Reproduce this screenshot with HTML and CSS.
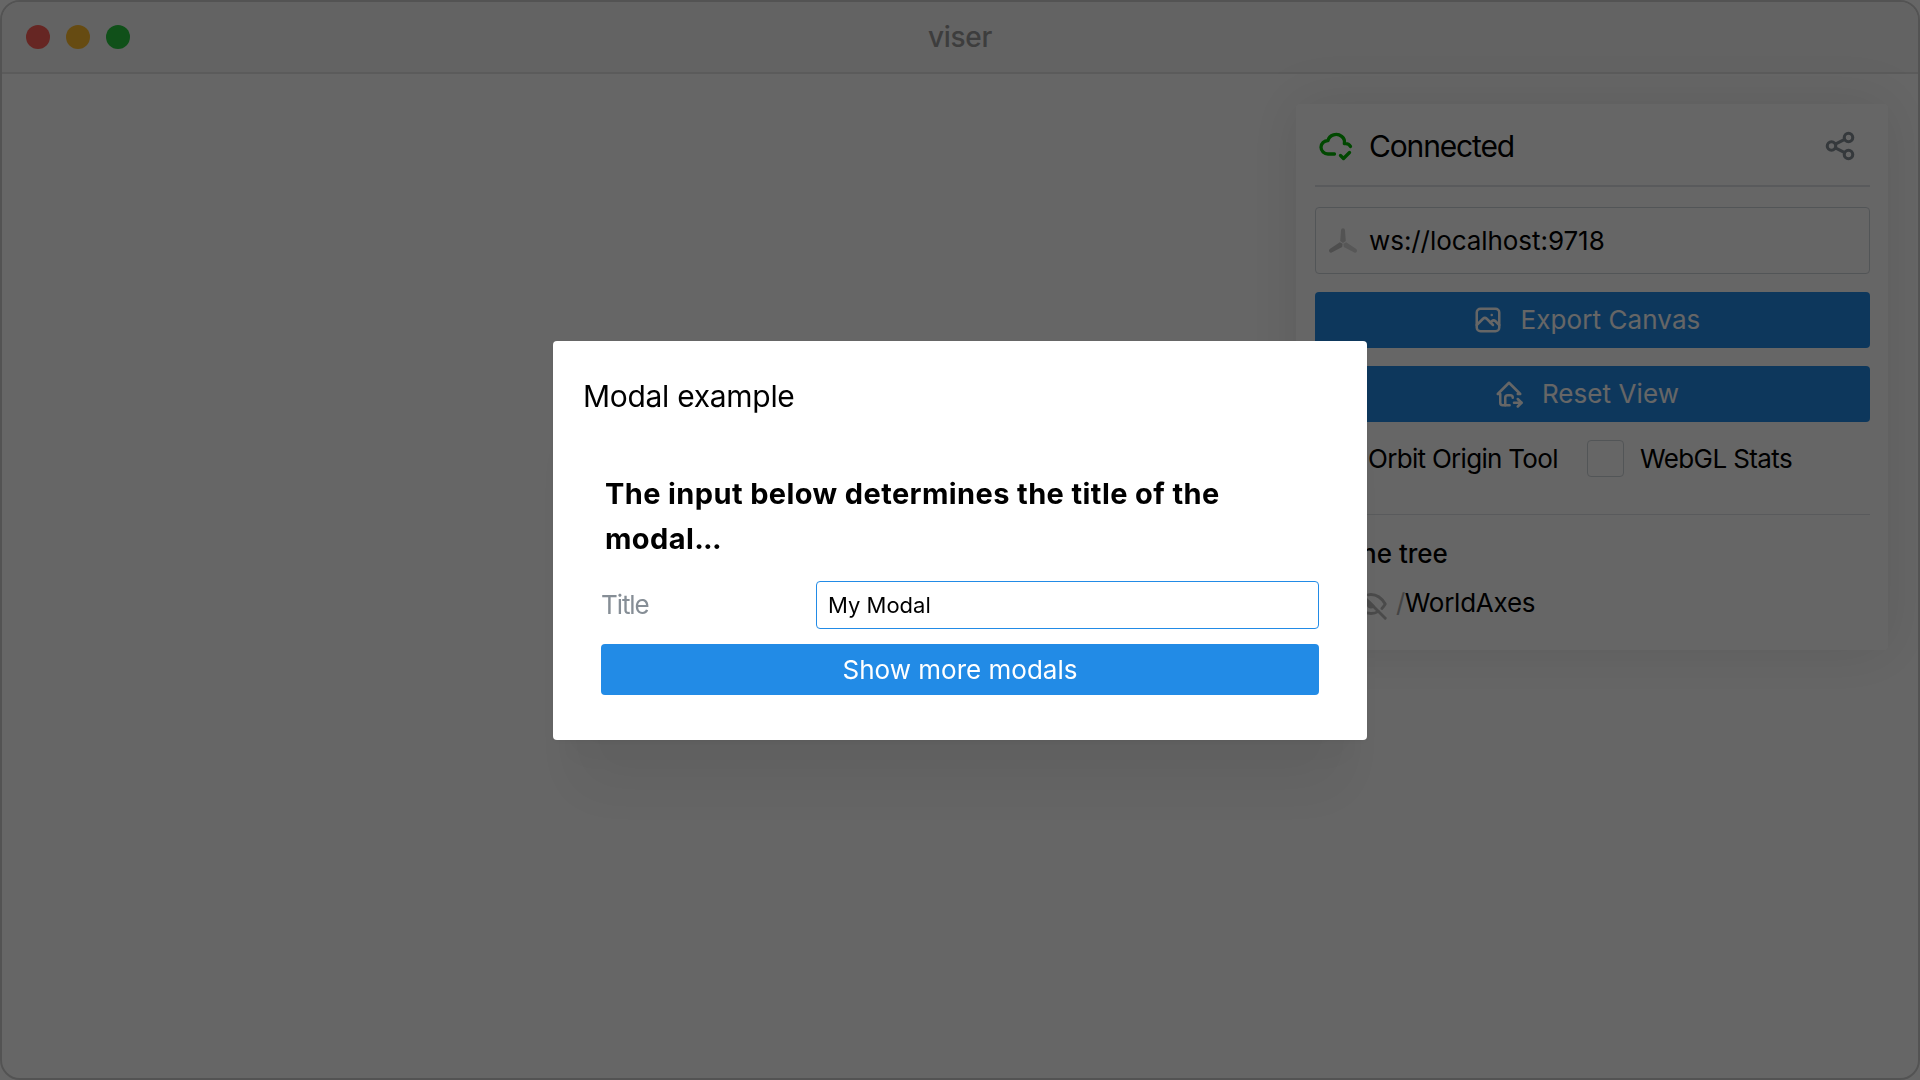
FILE: index.html
```html
<!DOCTYPE html>
<html lang="en">
<head>
<meta charset="utf-8">
<title>viser</title>
<link rel="stylesheet" href="styles.css">
</head>
<body>
<div class="window">
  <header class="titlebar">
    <div class="lights"><i class="light red"></i><i class="light yellow"></i><i class="light green"></i></div>
    <span class="window-title">viser</span>
  </header>
  <main class="viewport">
    <section class="panel">
      <div class="panel-head">
        <svg class="cloud" viewBox="0 0 24 24"><path d="M11 18.004h-4.343c-2.572 -.004 -4.657 -2.011 -4.657 -4.487c0 -2.475 2.085 -4.482 4.657 -4.482c.393 -1.762 1.794 -3.2 3.675 -3.773c1.88 -.572 3.956 -.193 5.444 1c1.488 1.19 2.162 3.007 1.77 4.769h.99c1.388 0 2.585 .82 3.138 2.007"/><path d="M15 19l2 2l4 -4"/></svg>
        <span class="status">Connected</span>
        <svg class="share" viewBox="0 0 24 24"><circle cx="6" cy="12" r="3"/><circle cx="18" cy="6" r="3"/><circle cx="18" cy="18" r="3"/><path d="M8.7 10.7l6.6 -3.4M8.7 13.3l6.6 3.4"/></svg>
      </div>
      <div class="panel-body">
        <div class="server">
          <svg class="logo" viewBox="0 0 32 30"><path class="spoke-a" d="M14 4.2a2 2 0 0 1 4 0l.8 10.800l-2.800 2l-2.800 -2z"/><path class="spoke-b" d="M12.800 16.200l2.800 1.600l-.4 3.200l-10.500 5.500a2 2 0 0 1 -2 -3.400z"/><path class="spoke-c" d="M19.200 16.200l-2.800 1.600l.4 3.200l10.500 5.500a2 2 0 0 0 2 -3.400z"/></svg>
          <span class="address">ws://localhost:9718</span>
        </div>
        <div class="button">
          <svg viewBox="0 0 24 24"><path d="M15 8h.01"/><path d="M3 6a3 3 0 0 1 3 -3h12a3 3 0 0 1 3 3v12a3 3 0 0 1 -3 3h-12a3 3 0 0 1 -3 -3v-12z"/><path d="M3 16l5 -5c.928 -.893 2.072 -.893 3 0l5 5"/><path d="M14 14l1 -1c.928 -.893 2.072 -.893 3 0l3 3"/></svg>
          <span>Export Canvas</span>
        </div>
        <div class="button">
          <svg viewBox="0 0 24 24"><path d="M9 21v-6a2 2 0 0 1 2 -2h2a2 2 0 0 1 2 2"/><path d="M19 12h2l-9 -9l-9 9h2v7a2 2 0 0 0 2 2h5.500"/><path d="M16 19h6"/><path d="M19 16l3 3l-3 3"/></svg>
          <span>Reset View</span>
        </div>
        <div class="checks">
          <span class="box"></span><span class="check-label orbit">Orbit Origin Tool</span>
          <span class="box"></span><span class="check-label">WebGL Stats</span>
        </div>
        <div class="tree">
          <div class="tree-title">Scene tree</div>
          <div class="node">
            <svg class="eye" viewBox="0 0 24 24"><path class="pupil" d="M10.585 10.587a2 2 0 0 0 2.829 2.828z"/><path d="M16.681 16.673a8.717 8.717 0 0 1 -4.681 1.327c-3.600 0 -6.600 -2 -9 -6c1.272 -2.120 2.712 -3.678 4.320 -4.674m2.860 -1.146a9.055 9.055 0 0 1 1.820 -.18c3.600 0 6.600 2 9 6c-.666 1.110 -1.379 2.067 -2.138 2.870"/><path d="M3 3l18 18"/></svg>
            <span class="slash">/</span><span class="node-name">WorldAxes</span>
          </div>
        </div>
      </div>
    </section>
  </main>
</div>
<div class="overlay">
  <section class="modal">
    <h2 class="modal-title">Modal example</h2>
    <p class="message">The input below determines the title of the modal<span class="dots">...</span></p>
    <div class="field">
      <span class="field-label">Title</span>
      <span class="field-input">My Modal</span>
    </div>
    <div class="modal-button">Show more modals</div>
  </section>
</div>
</body>
</html>
```
FILE: styles.css
```css
* { box-sizing: border-box; }
body { margin: 0; width: 1920px; height: 1080px; overflow: hidden; background: #fff; font-family: Inter, sans-serif; font-size: 26px; color: #000; }
svg { display: block; flex: none; fill: none; stroke: currentColor; stroke-width: 2; stroke-linecap: round; stroke-linejoin: round; }
span { white-space: nowrap; }

.window { width: 1920px; height: 1080px; display: flex; flex-direction: column; border: 2px solid #d0d0d0; border-radius: 20px; overflow: hidden; background: #fff; }
.titlebar { height: 72px; flex: none; display: grid; grid-template-columns: 1fr auto 1fr; align-items: center; background: #f7f7f7; border-bottom: 2px solid #e3e3e3; }
.lights { display: flex; gap: 16px; padding-left: 24px; }
.light { width: 24px; height: 24px; border-radius: 50%; }
.red { background: #ff5f57; }
.yellow { background: #febc2e; }
.green { background: #28c840; }
.window-title { font-size: 28px; font-weight: 500; color: #999; letter-spacing: -0.3px; }
.viewport { flex: 1; display: flex; justify-content: flex-end; align-items: flex-start; padding: 30px 30px 0 0; }

.panel { width: 592px; height: 546px; border-radius: 4px; background: #fff; box-shadow: 0 0 56px rgba(0, 0, 0, 0.1); padding: 0 18px 0 19px; }
.panel-head { height: 83px; display: flex; align-items: center; padding: 0 13px 0 3px; border-bottom: 2px solid #dee2e6; }
.cloud { width: 36px; height: 36px; color: #00b300; stroke-width: 2.2; }
.status { flex: 1; padding: 2px 0 0 15px; font-size: 30px; letter-spacing: -1.15px; }
.share { width: 34px; height: 34px; color: #868e96; margin-top: 2px; stroke-width: 2.2; }
.panel-body { display: flex; flex-direction: column; padding-top: 20px; }
.server { height: 67px; display: flex; align-items: center; border: 1px solid #ced4da; border-radius: 4px; padding-left: 11px; }
.logo { width: 32px; height: 30px; stroke: none; }
.spoke-a { fill: #d0d0d0; }
.spoke-b { fill: #c4c4c4; }
.spoke-c { fill: #dadada; }
.address { padding-left: 10px; letter-spacing: -0.06px; }
.button { height: 56px; margin-top: 18px; padding: 0 12px 1px 0; display: flex; align-items: center; justify-content: center; gap: 18px; border-radius: 4px; background: #228be6; color: #fff; letter-spacing: 0.08px; }
.button svg { width: 30px; height: 30px; }
.checks { display: flex; align-items: center; margin-top: 18px; }
.box { width: 37px; height: 37px; border: 1px solid #ced4da; border-radius: 4px; }
.check-label { padding-left: 16px; letter-spacing: -0.6px; }
.orbit { width: 235px; letter-spacing: -0.7px; }
.tree { margin-top: 37px; border-top: 1px solid #dee2e6; padding-top: 20px; }
.tree-title { font-weight: 500; line-height: 38px; margin-left: -1px; }
.node { display: flex; align-items: center; height: 38px; margin-top: 10px; padding-left: 37px; }
.eye { width: 38px; height: 38px; margin-top: 4px; color: #b8b8b8; stroke-width: 1.8; }
.pupil { fill: currentColor; }
.slash { color: #aaa; padding-left: 6px; letter-spacing: -0.6px; }
.node-name { letter-spacing: -0.25px; }

.overlay { position: fixed; inset: 0; display: flex; align-items: center; justify-content: center; background: rgba(0, 0, 0, 0.6); }
.modal { width: 814px; height: 399px; margin-top: 1px; padding: 32px 48px 45px; border-radius: 4px; background: #fff; box-shadow: 0 2px 6px rgba(0, 0, 0, 0.05), 0 72px 56px -14px rgba(0, 0, 0, 0.05), 0 34px 34px -14px rgba(0, 0, 0, 0.04); }
.modal-title { margin: 0 0 0 -18px; font-size: 30px; font-weight: 400; line-height: 46px; letter-spacing: -0.3px; }
.message { margin: 52px 0 0 4px; font-size: 29px; font-weight: 700; line-height: 45px; width: 660px; letter-spacing: 0.39px; }
.dots { letter-spacing: -0.8px; }
.field { display: flex; align-items: center; margin-top: 20px; }
.field-label { width: 215px; padding-bottom: 2px; color: #868e96; letter-spacing: -1.1px; }
.field-input { flex: 1; height: 48px; line-height: 46px; padding-left: 11px; border: 1px solid #228be6; border-radius: 4px; font-size: 22px; }
.modal-button { height: 51px; margin-top: 15px; border-radius: 4px; background: #228be6; color: #fff; text-align: center; line-height: 51px; }
```
